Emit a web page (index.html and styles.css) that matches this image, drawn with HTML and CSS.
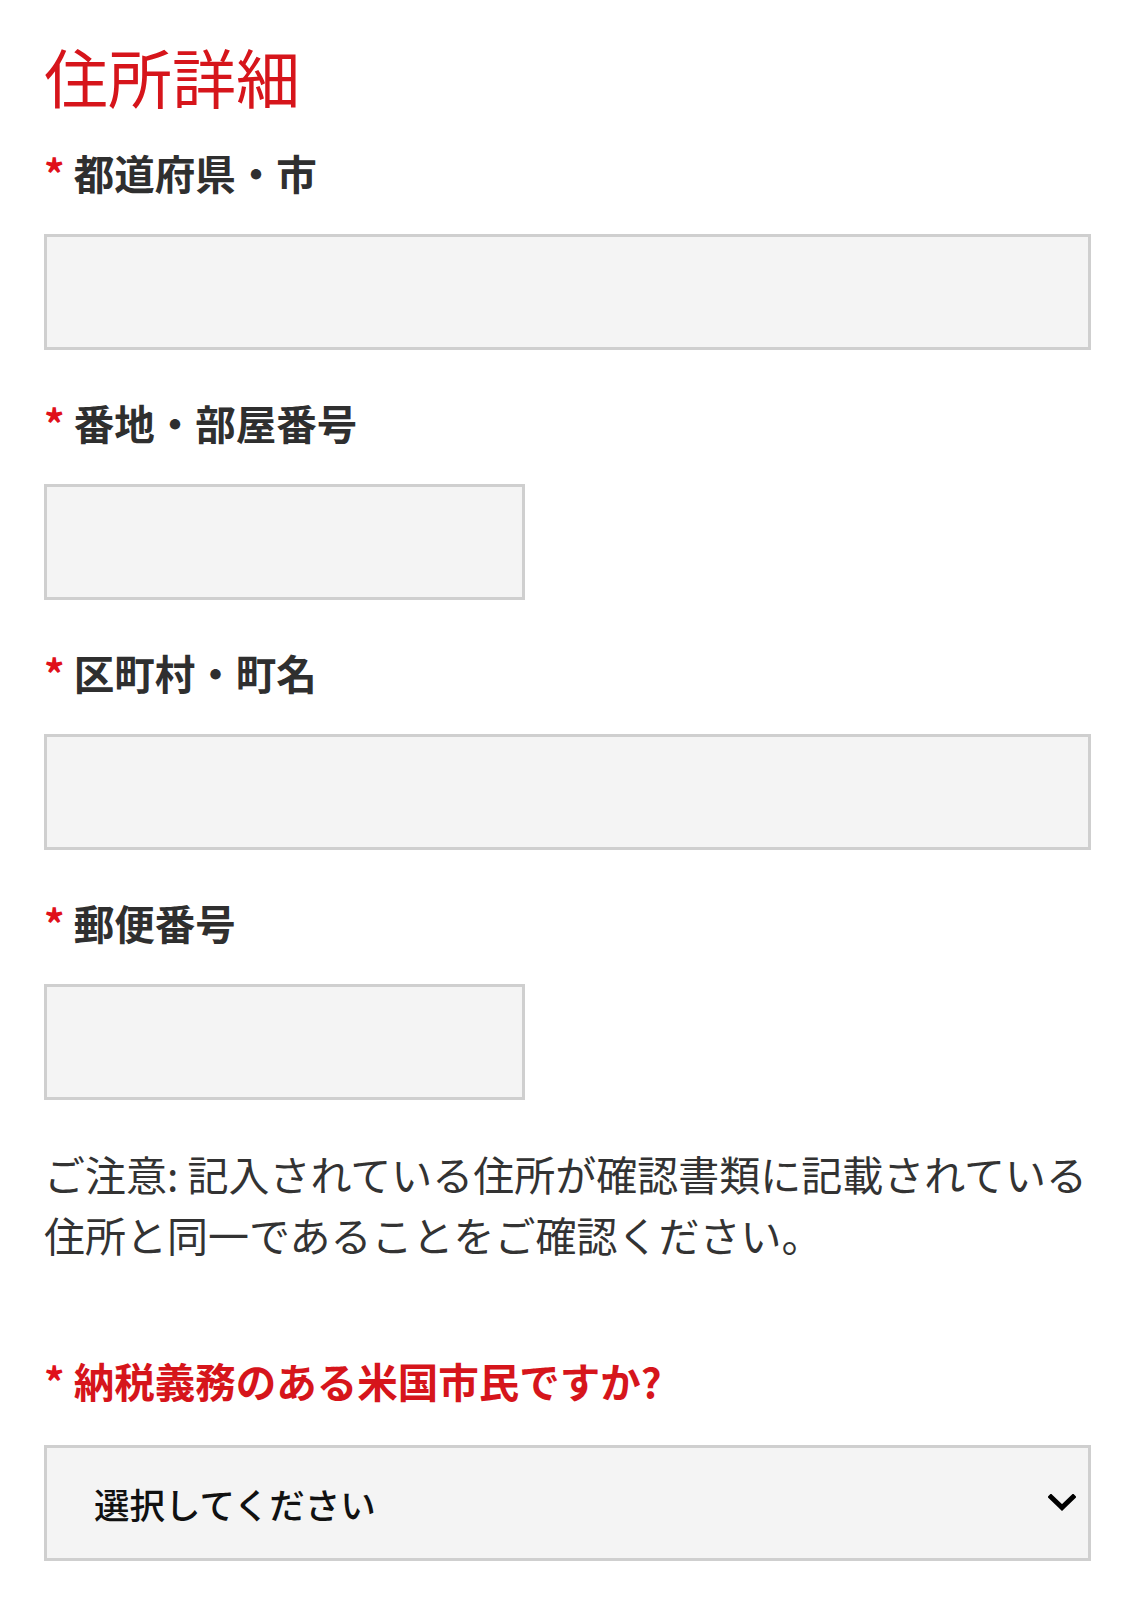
FILE: index.html
```html
<!DOCTYPE html>
<html lang="ja">
<head>
<meta charset="utf-8">
<title>住所詳細</title>
<link rel="stylesheet" href="styles.css">
</head>
<body>
<main class="form">
  <h2 class="title">住所詳細</h2>

  <div class="field">
    <label class="label" for="pref"><span class="req">*</span> 都道府県・市</label>
    <input class="input input-full" id="pref" type="text">
  </div>

  <div class="field">
    <label class="label" for="addr"><span class="req">*</span> 番地・部屋番号</label>
    <input class="input input-half" id="addr" type="text">
  </div>

  <div class="field">
    <label class="label" for="town"><span class="req">*</span> 区町村・町名</label>
    <input class="input input-full" id="town" type="text">
  </div>

  <div class="field">
    <label class="label" for="zip"><span class="req">*</span> 郵便番号</label>
    <input class="input input-half" id="zip" type="text">
  </div>

  <p class="note">ご注意: 記入されている住所が確認書類に記載されている住所と同一であることをご確認ください。</p>

  <div class="field field-select">
    <label class="label label-red" for="tax"><span class="req">*</span> 納税義務のある米国市民ですか?</label>
    <div class="select-wrap">
      <select class="select" id="tax">
        <option>選択してください</option>
        <option>はい</option>
        <option>いいえ</option>
      </select>
      <svg class="chevron" width="28" height="18" viewBox="0 0 28 18" aria-hidden="true">
        <path d="M3 3 L14 13.5 L25 3" fill="none" stroke="#000" stroke-width="5" stroke-linecap="square"/>
      </svg>
    </div>
  </div>
</main>
</body>
</html>
```

FILE: styles.css
```css
* {
  box-sizing: border-box;
}

html, body {
  margin: 0;
  padding: 0;
  background: #fff;
}

body {
  font-family: "Noto Sans CJK JP", "Noto Sans", sans-serif;
  color: #333;
}

.form {
  width: 1091px;
  padding: 38px 0 40px 44px;
  display: flex;
  flex-direction: column;
}

.title {
  margin: 0 0 31px;
  font-size: 64px;
  line-height: 74px;
  font-weight: 400;
  color: #d6151b;
}

.field {
  display: flex;
  flex-direction: column;
  gap: 31px;
  margin-bottom: 43px;
}

.label {
  display: block;
  font-size: 40.5px;
  line-height: 60px;
  font-weight: 700;
  color: #2f2f2f;
}

.req {
  color: #e0101a;
}

.label-red {
  color: #d6151b;
}

.input {
  display: block;
  height: 116px;
  margin: 0;
  border: 3px solid #cfcfcf;
  background: #f4f4f4;
  font-family: inherit;
  font-size: 35px;
  padding: 0 20px;
  outline: none;
}

.input-full {
  width: 1047px;
}

.input-half {
  width: 481px;
}

.note {
  margin: 0 0 86px;
  width: 1047px;
  font-size: 41px;
  line-height: 61px;
  color: #333;
}

.field-select {
  gap: 34px;
  margin-bottom: 0;
}

.select-wrap {
  position: relative;
  width: 1047px;
  height: 116px;
}

.select {
  -webkit-appearance: none;
  appearance: none;
  width: 100%;
  height: 100%;
  margin: 0;
  border: 3px solid #cfcfcf;
  border-radius: 0;
  background: #f4f4f4;
  padding: 0 0 0 47px;
  font-family: "Noto Sans CJK JP", "Noto Sans", sans-serif;
  font-size: 35.5px;
  font-weight: 500;
  color: #111;
  outline: none;
}

.chevron {
  position: absolute;
  right: 15px;
  top: 49px;
  pointer-events: none;
}
```
